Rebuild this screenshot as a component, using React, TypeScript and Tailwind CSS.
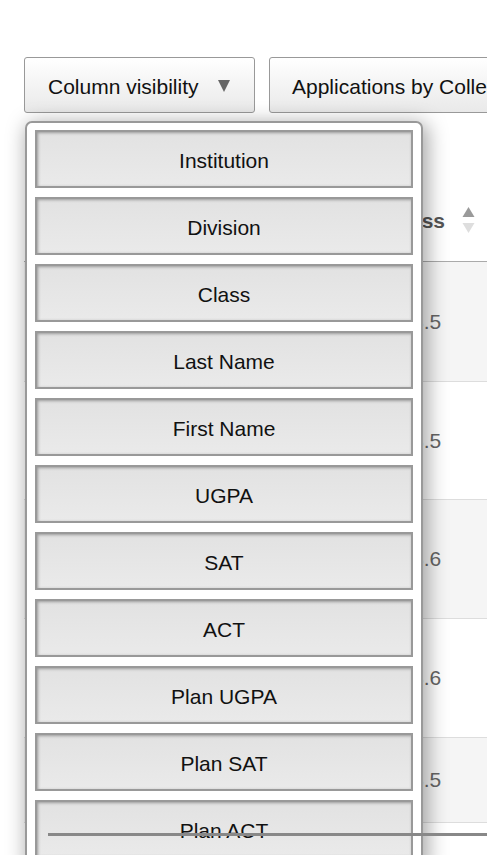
import React from "react";

const columns = [
  "Institution",
  "Division",
  "Class",
  "Last Name",
  "First Name",
  "UGPA",
  "SAT",
  "ACT",
  "Plan UGPA",
  "Plan SAT",
  "Plan ACT",
];

const rows = [
  { value: "3.5", height: "h-[120px]", striped: true },
  { value: "3.5", height: "h-[118px]", striped: false },
  { value: "3.6", height: "h-[119px]", striped: true },
  { value: "3.6", height: "h-[119px]", striped: false },
  { value: "3.5", height: "h-[85px]", striped: true },
];

function SortArrows() {
  return (
    <svg width="13" height="32" viewBox="0 0 13 32" className="shrink-0">
      <polygon points="6.5,2 12.5,12 0.5,12" fill="#9a9a9a" />
      <polygon points="0.5,18 12.5,18 6.5,28" fill="#dedede" />
    </svg>
  );
}

export default function App() {
  return (
    <div
      className="relative w-[487px] h-[855px] overflow-hidden bg-white text-[#111]"
      style={{ fontFamily: '"Liberation Sans", Arial, sans-serif' }}
    >
      {/* button bar */}
      <div className="flex gap-[14px] pt-[57px] pl-[24px] whitespace-nowrap">
        <button className="shrink-0 flex items-center h-[56px] w-[231px] pl-[23px] pr-[24px] pt-[3px] justify-between border border-[#999] rounded-[3px] bg-gradient-to-b from-white to-[#e9e9e9] text-[21px]">
          <span>Column visibility</span>
          <svg width="12" height="13" viewBox="0 0 12 13" className="mb-[3px]">
            <polygon points="0,1 12,1 6,13" fill="#666" />
          </svg>
        </button>
        <button className="shrink-0 flex items-center h-[56px] pl-[22px] pr-[24px] pt-[3px] border border-[#999] rounded-[3px] bg-gradient-to-b from-white to-[#e9e9e9] text-[21px]">
          Applications by College
        </button>
      </div>

      {/* table behind the collection */}
      <div className="mt-[67px] ml-[24px]">
        <div className="flex h-[82px] border-b border-[#aaa]">
          <div className="w-[365px] shrink-0" />
          <div className="flex items-center gap-[17px] font-bold text-[21px] text-[#555]">
            <span>Class</span>
            <SortArrows />
          </div>
        </div>
        {rows.map((r, i) => (
          <div
            key={i}
            className={`flex items-center border-b border-[#ddd] ${r.height} ${
              r.striped ? "bg-[#f5f5f5]" : "bg-white"
            }`}
          >
            <div className="w-[388px] shrink-0" />
            <span className="text-[21px] text-[#666]">{r.value}</span>
          </div>
        ))}
      </div>

      {/* column visibility collection */}
      <div className="absolute left-[25px] top-[121px] w-[398px] border-2 border-[#999] rounded-[7px] bg-white px-[8px] pt-[7px] pb-[8px] flex flex-col gap-[9px] shadow-[3px_4px_20px_2px_rgba(0,0,0,0.35)]">
        {columns.map((c) => (
          <button
            key={c}
            className="h-[58px] w-full pt-[3px] border-2 border-[#999] bg-gradient-to-b from-[#e2e2e2] to-[#eaeaea] shadow-[inset_1px_1px_3px_#999] text-[21px] text-[#111]"
          >
            {c}
          </button>
        ))}
      </div>

      {/* bottom scroll bar */}
      <div className="absolute left-[48px] right-0 top-[833px] h-[3px] bg-[#888]" />
    </div>
  );
}
